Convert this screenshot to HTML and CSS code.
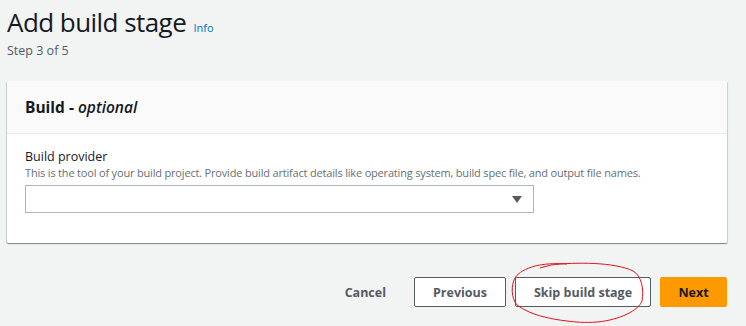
FILE: index.html
```html
<!DOCTYPE html>
<html lang="en">
<head>
  <meta charset="UTF-8">
  <title>Add build stage</title>
  <link rel="stylesheet" href="styles.css">
</head>
<body>

<div class="page">
  <!-- PAGE HEADER -->
  <div class="page-head">
    <h1>Add build stage <a class="info" href="#">Info</a></h1>
    <div class="step">Step 3 of 5</div>
  </div>

  <!-- BUILD CARD -->
  <div class="card">
    <div class="card-head">
      <h2>Build - <em>optional</em></h2>
    </div>
    <div class="card-body">
      <label class="field-label">Build provider</label>
      <div class="field-desc">This is the tool of your build project. Provide build artifact details like operating system, build spec file, and output file names.</div>
      <div class="select">
        <span class="caret"></span>
      </div>
    </div>
  </div>

  <!-- ACTIONS -->
  <div class="actions">
    <button class="btn-link">Cancel</button>
    <button class="btn">Previous</button>
    <div class="skip-wrap">
      <button class="btn skip">Skip build stage</button>
      <svg class="scribble" width="145" height="66" viewBox="0 0 145 66">
        <path d="M35 8 L46 5 C 70 2, 110 2, 128 11 C 137 16, 139 30, 137 41 C 134 50, 115 60, 92 62 C 80 63, 70 62, 62 61 C 45 59, 25 55, 12 45 C 6 38, 6 25, 10 18 C 14 12, 20 9, 30 6 C 38 4, 50 3, 62 4" fill="none" stroke="#e0141e" stroke-width="1"/>
      </svg>
    </div>
    <button class="btn primary">Next</button>
  </div>
</div>

</body>
</html>
```

FILE: styles.css
```css
* { margin: 0; padding: 0; box-sizing: border-box; }

body {
  font-family: "Open Sans", "Noto Sans", sans-serif;
  background-color: #f2f3f3;
  color: #16191f;
  width: 746px;
  height: 326px;
  overflow: hidden;
}

.page {
  width: 720px;
  margin-left: 7px;
}

.page-head {
  padding-top: 4px;
  height: 81px;
}

h1 {
  font-size: 26px;
  font-weight: 400;
  line-height: 36px;
  letter-spacing: -0.55px;
}

.info {
  font-size: 11px;
  line-height: 1;
  font-weight: 400;
  color: #0073bb;
  text-decoration: none;
  letter-spacing: 0;
  margin-left: 1px;
}

.step {
  margin-top: 3px;
  font-size: 12.5px;
  line-height: 16px;
  color: #545b64;
}

.card {
  background-color: #fff;
  border-radius: 1px;
  box-shadow: 0 1px 1px 0 rgba(0, 28, 36, 0.3), 1px 1px 1px 0 rgba(0, 28, 36, 0.15), -1px 1px 1px 0 rgba(0, 28, 36, 0.15);
}

.card-head {
  height: 53px;
  background-color: #fafafa;
  border-bottom: 1px solid #eaeded;
  display: flex;
  align-items: center;
  padding-left: 18px;
}

h2 {
  font-size: 15.5px;
  font-weight: 700;
}

h2 em {
  font-weight: 600;
}

.card-body {
  padding: 14px 18px 30px;
}

.field-label {
  display: block;
  font-size: 12.5px;
  line-height: 18px;
}

.field-desc {
  font-size: 11px;
  line-height: 14px;
  color: #687078;
  letter-spacing: -0.18px;
}

.select {
  margin-top: 5px;
  width: 509px;
  height: 28px;
  border: 1px solid #aab7b8;
  background-color: #fff;
  display: flex;
  align-items: center;
  justify-content: flex-end;
  padding-right: 11px;
}

.caret {
  width: 0;
  height: 0;
  border-left: 5px solid transparent;
  border-right: 5px solid transparent;
  border-top: 7px solid #545b64;
}

.actions {
  margin-top: 34px;
  display: flex;
  justify-content: flex-end;
  align-items: center;
  gap: 9px;
}

button {
  font-family: inherit;
  font-size: 12.5px;
  font-weight: 700;
  color: #545b64;
  cursor: pointer;
  white-space: nowrap;
}

.btn-link {
  background: none;
  border: none;
  padding: 0 19px;
}

.btn {
  height: 30px;
  padding: 0 18px;
  background-color: #fff;
  border: 1px solid #545b64;
  border-radius: 2px;
}

.skip-wrap {
  position: relative;
  display: flex;
}

.skip {
  width: 136px;
  padding: 0;
}

.scribble {
  position: absolute;
  left: -10px;
  top: -17px;
  pointer-events: none;
}

.primary {
  width: 67px;
  padding: 0;
  background-color: #f90;
  border-color: #f90;
  color: #16191f;
}
```
